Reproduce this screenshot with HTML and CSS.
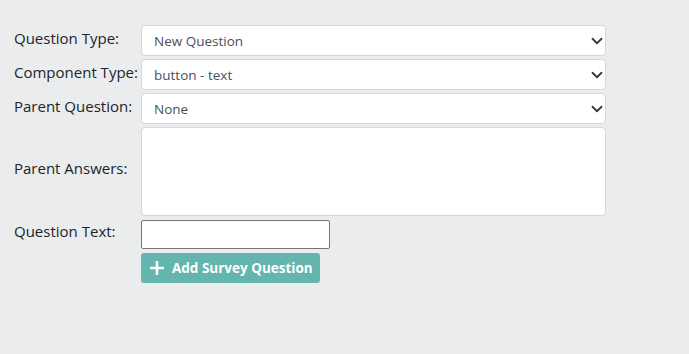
FILE: index.html
```html
<!DOCTYPE html>
<html>
<head>
<meta charset="utf-8">
<link rel="stylesheet" href="styles.css">
</head>
<body>
<form class="form">
  <label class="lbl">Question Type:</label>
  <div class="sel-wrap">
    <select class="sel"><option>New Question</option></select>
    <svg class="chev" viewBox="0 0 16 16" width="12" height="12"><path d="M2 5l6 6 6-6" fill="none" stroke="#343a40" stroke-width="2.4" stroke-linecap="round" stroke-linejoin="round"/></svg>
  </div>
  <label class="lbl">Component Type:</label>
  <div class="sel-wrap">
    <select class="sel"><option>button - text</option></select>
    <svg class="chev" viewBox="0 0 16 16" width="12" height="12"><path d="M2 5l6 6 6-6" fill="none" stroke="#343a40" stroke-width="2.4" stroke-linecap="round" stroke-linejoin="round"/></svg>
  </div>
  <label class="lbl">Parent Question:</label>
  <div class="sel-wrap">
    <select class="sel"><option>None</option></select>
    <svg class="chev" viewBox="0 0 16 16" width="12" height="12"><path d="M2 5l6 6 6-6" fill="none" stroke="#343a40" stroke-width="2.4" stroke-linecap="round" stroke-linejoin="round"/></svg>
  </div>
  <label class="lbl lbl-area">Parent Answers:</label>
  <div class="area"></div>
  <label class="lbl lbl-text">Question Text:</label>
  <div><input class="txt" type="text"></div>
  <div></div>
  <div><button type="button" class="btn"><svg class="plus" viewBox="0 0 14 14" width="14" height="14"><path d="M7 1v12M1 7h12" stroke="#fff" stroke-width="2.6" stroke-linecap="round"/></svg><span>Add Survey Question</span></button></div>
</form>
</body>
</html>
```
FILE: styles.css
```css
html, body {
  margin: 0;
  padding: 0;
  background: #ebecee;
  height: 100%;
}
body {
  font-family: "Open Sans", "Noto Sans", sans-serif;
  color: #212529;
}
.form {
  display: grid;
  grid-template-columns: 127px 465px;
  row-gap: 3px;
  padding: 25px 0 0 14px;
  align-items: start;
}
.lbl {
  font-size: 15px;
  line-height: 20px;
  margin-top: 3px;
  white-space: nowrap;
}
.lbl-area {
  margin-top: 31px;
}
.lbl-text {
  margin-top: 2px;
}
.sel-wrap {
  position: relative;
  height: 31px;
}
.sel {
  appearance: none;
  -webkit-appearance: none;
  width: 100%;
  height: 31px;
  box-sizing: border-box;
  border: 1px solid #d3d6da;
  border-radius: 4px;
  background: #fff;
  font-family: "Open Sans", "Noto Sans", sans-serif;
  font-size: 13.5px;
  color: #495057;
  padding: 1px 12px 0;
  outline: none;
}
.chev {
  position: absolute;
  right: 3px;
  top: 10px;
  pointer-events: none;
}
.area {
  height: 89px;
  box-sizing: border-box;
  border: 1px solid #d3d6da;
  border-radius: 4px;
  background: #fff;
}
.txt {
  display: block;
  width: 189px;
  height: 29px;
  box-sizing: border-box;
  border: 1px solid #767676;
  border-radius: 2px;
  background: #fff;
  margin-top: 1px;
  outline: none;
}
.btn {
  display: flex;
  align-items: center;
  gap: 8px;
  margin-top: 1px;
  height: 30px;
  width: 179px;
  box-sizing: border-box;
  padding: 0 0 0 9px;
  border: none;
  border-radius: 3px;
  background: #63b5ad;
  color: #fff;
  font-family: "Open Sans", "Noto Sans", sans-serif;
  font-weight: 700;
  font-size: 13.5px;
  cursor: pointer;
}
```
